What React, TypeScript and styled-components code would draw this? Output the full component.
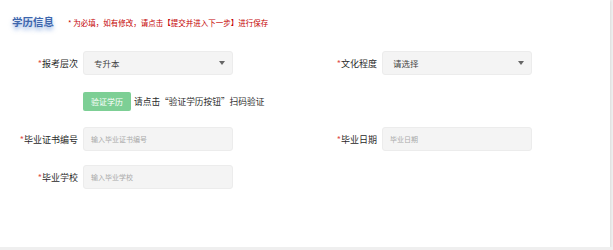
import React from "react";
import styled, { createGlobalStyle } from "styled-components";

const Global = createGlobalStyle`
  html, body { margin: 0; padding: 0; background: #efefef; }
  body { font-family: "Noto Sans CJK SC", "Noto Sans", sans-serif; }
  * { box-sizing: border-box; }
`;

const Card = styled.div`
  width: 610px;
  height: 247px;
  background: #ffffff;
  box-shadow: 1px 1px 2px rgba(0, 0, 0, 0.08);
  padding: 12px 0 0 0;
`;

const Header = styled.div`
  display: flex;
  align-items: center;
  gap: 14px;
  padding-left: 12px;
  height: 20px;
`;

const Title = styled.div`
  font-size: 10.5px;
  font-weight: 700;
  color: #3d66ad;
  line-height: 16px;
  text-shadow: 0 3px 4px rgba(80, 130, 210, 0.6);
`;

const Note = styled.div`
  font-size: 7.5px;
  color: #c40000;
  line-height: 12px;
  margin-top: 1px;
`;

const Form = styled.div`
  display: grid;
  grid-template-columns: 299px 299px;
  margin-top: 19px;
`;

const Field = styled.div<{ $mt?: number }>`
  display: flex;
  align-items: center;
  margin-top: ${(p) => p.$mt ?? 0}px;
`;

const Label = styled.div`
  width: 83px;
  padding-right: 5px;
  text-align: right;
  font-size: 9px;
  color: #2a2a2a;
  white-space: nowrap;
`;

const Star = styled.span`
  color: #e0504a;
`;

const Control = styled.div<{ $placeholder?: boolean }>`
  width: 150px;
  height: 24px;
  background: #f4f4f4;
  border: 1px solid #ececec;
  border-radius: 3px;
  display: flex;
  align-items: center;
  justify-content: space-between;
  padding: 0 7px 0 ${(p) => (p.$placeholder ? 7 : 10)}px;
  font-size: ${(p) => (p.$placeholder ? 7 : 8.5)}px;
  color: ${(p) => (p.$placeholder ? "#aaa" : "#444")};
`;

const Arrow = styled.span`
  width: 0;
  height: 0;
  border-left: 3.5px solid transparent;
  border-right: 3.5px solid transparent;
  border-top: 4px solid #666;
`;

const VerifyRow = styled.div`
  grid-column: 1 / span 2;
  display: flex;
  align-items: center;
  padding-left: 83px;
  margin-top: 17px;
  gap: 3px;
`;

const GreenButton = styled.button`
  width: 48px;
  height: 19px;
  border: none;
  border-radius: 2px;
  background: #7dcf95;
  color: #fff;
  font-family: inherit;
  font-size: 8px;
  padding: 0;
`;

const Hint = styled.div`
  font-size: 8.7px;
  color: #2a2a2a;
`;

export default function App() {
  return (
    <>
      <Global />
      <Card>
        <Header>
          <Title>学历信息</Title>
          <Note>* 为必填，如有修改，请点击【提交并进入下一步】进行保存</Note>
        </Header>
        <Form>
          <Field>
            <Label><Star>*</Star>报考层次</Label>
            <Control>专升本<Arrow /></Control>
          </Field>
          <Field>
            <Label><Star>*</Star>文化程度</Label>
            <Control>请选择<Arrow /></Control>
          </Field>
          <VerifyRow>
            <GreenButton>验证学历</GreenButton>
            <Hint>请点击“验证学历按钮”扫码验证</Hint>
          </VerifyRow>
          <Field $mt={16}>
            <Label><Star>*</Star>毕业证书编号</Label>
            <Control $placeholder>输入毕业证书编号</Control>
          </Field>
          <Field $mt={16}>
            <Label><Star>*</Star>毕业日期</Label>
            <Control $placeholder>毕业日期</Control>
          </Field>
          <Field $mt={14}>
            <Label><Star>*</Star>毕业学校</Label>
            <Control $placeholder>输入毕业学校</Control>
          </Field>
        </Form>
      </Card>
    </>
  );
}
